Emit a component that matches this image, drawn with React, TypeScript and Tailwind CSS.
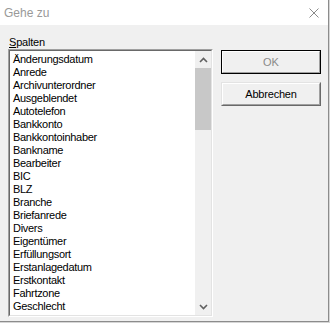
const columns = [
  "Änderungsdatum",
  "Anrede",
  "Archivunterordner",
  "Ausgeblendet",
  "Autotelefon",
  "Bankkonto",
  "Bankkontoinhaber",
  "Bankname",
  "Bearbeiter",
  "BIC",
  "BLZ",
  "Branche",
  "Briefanrede",
  "Divers",
  "Eigentümer",
  "Erfüllungsort",
  "Erstanlagedatum",
  "Erstkontakt",
  "Fahrtzone",
  "Geschlecht",
];

function Chevron({ up }: { up?: boolean }) {
  return (
    <svg width="9" height="6" viewBox="0 0 9 6" className="block">
      <path
        d={up ? "M1 5 L4.5 1.5 L8 5" : "M1 1 L4.5 4.5 L8 1"}
        fill="none"
        stroke="#606060"
        strokeWidth="1.6"
      />
    </svg>
  );
}

export default function App() {
  return (
    <div
      className="w-[330px] h-[323px] bg-[#d6d6d6]"
      style={{ fontFamily: '"Liberation Sans", Arial, sans-serif' }}
    >
      <div className="w-[329px] h-[322px] flex flex-col bg-[#f0f0f0] border-r border-b border-[#8c8c8c]">
        {/* title bar */}
        <div className="h-[25px] bg-white flex items-center justify-between pl-[4px] pr-[9px]">
          <span className="text-[12px] text-[#999999]">Gehe zu</span>
          <svg width="10" height="10" viewBox="0 0 10 10">
            <path d="M0.5 0.5 L9.5 9.5 M9.5 0.5 L0.5 9.5" stroke="#8a8a8a" strokeWidth="1" />
          </svg>
        </div>

        <div className="flex flex-1 pt-[10px] pl-[8px] gap-[8px]">
          {/* left column */}
          <div className="flex flex-col w-[205px]">
            <div className="h-[14px] leading-[14px] text-[11px] tracking-[-0.2px] text-black pl-[1px]">
              <span className="underline underline-offset-[1px]">S</span>palten
            </div>
            <div className="h-[268px] border border-t-[#a0a0a0] border-l-[#a0a0a0] border-r-white border-b-white">
              <div className="h-full border border-t-[#696969] border-l-[#696969] border-r-[#e3e3e3] border-b-[#e3e3e3] flex bg-white">
                <div className="flex-1 overflow-hidden pt-[2px]">
                  {columns.map((c) => (
                    <div
                      key={c}
                      className="h-[13px] leading-[13px] pl-[3px] text-[11px] tracking-[-0.3px] text-black whitespace-nowrap"
                    >
                      {c}
                    </div>
                  ))}
                </div>
                <div className="w-[16px] flex flex-col bg-[#f0f0f0]">
                  <div className="h-[17px] flex items-center justify-center">
                    <Chevron up />
                  </div>
                  <div className="h-[62px] bg-[#c8c8c8]" />
                  <div className="flex-1" />
                  <div className="h-[17px] flex items-center justify-center">
                    <Chevron />
                  </div>
                </div>
              </div>
            </div>
          </div>

          {/* right column */}
          <div className="flex flex-col gap-[8px] pt-[15px] w-[100px]">
            <div className="h-[24px] border border-black bg-[#f0f0f0]">
              <div className="h-full border border-t-white border-l-white border-r-[#a0a0a0] border-b-[#a0a0a0] flex items-center justify-center text-[11px] text-[#8a8a8a]">
                OK
              </div>
            </div>
            <div className="h-[24px] border border-t-[#e3e3e3] border-l-[#e3e3e3] border-r-[#696969] border-b-[#696969] bg-[#f0f0f0]">
              <div className="h-full border border-t-white border-l-white border-r-[#a0a0a0] border-b-[#a0a0a0] flex items-center justify-center text-[11px] tracking-[-0.2px] text-black">
                Abbrechen
              </div>
            </div>
          </div>
        </div>
      </div>
    </div>
  );
}
